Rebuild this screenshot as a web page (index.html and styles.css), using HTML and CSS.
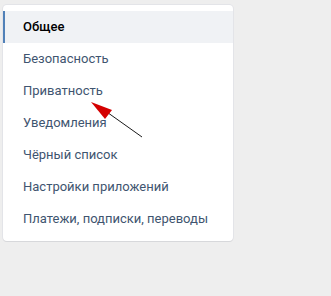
FILE: index.html
```html
<!DOCTYPE html>
<html lang="ru">
<head>
<meta charset="utf-8">
<link rel="stylesheet" href="styles.css">
</head>
<body>
<div class="page">
  <nav class="menu">
    <a class="item active">Общее</a>
    <a class="item">Безопасность</a>
    <a class="item">Приватность</a>
    <a class="item">Уведомления</a>
    <a class="item">Чёрный список</a>
    <a class="item">Настройки приложений</a>
    <a class="item">Платежи, подписки, переводы</a>
  </nav>
  <svg class="arrow" width="331" height="296" viewBox="0 0 331 296">
    <line x1="142" y1="137" x2="104" y2="110" stroke="#1a1a1a" stroke-width="1"/>
    <polygon points="91,102 112,110 105,119" fill="#d40000"/>
  </svg>
</div>
</body>
</html>
```

FILE: styles.css
```css
html, body {
  margin: 0;
  padding: 0;
  background: #eeeeee;
}
.page {
  position: relative;
  width: 331px;
  height: 296px;
  padding: 5px 0 0 3px;
  box-sizing: border-box;
}
.menu {
  width: 230px;
  background: #fff;
  border-radius: 4px;
  box-shadow: 0 1px 0 0 #d7d8db, 0 0 0 1px #e3e4e8;
  padding: 6px 0;
  display: flex;
  flex-direction: column;
}
.item {
  height: 32px;
  line-height: 32px;
  padding-left: 18px;
  font-family: Roboto, "Liberation Sans", sans-serif;
  font-size: 13px;
  color: #3f5570;
  border-left: 2px solid transparent;
}
.item.active {
  background: #f0f2f5;
  border-left-color: #5181b8;
  color: #000;
  font-weight: 500;
}
.arrow {
  position: absolute;
  left: 0;
  top: 0;
  pointer-events: none;
}
```
